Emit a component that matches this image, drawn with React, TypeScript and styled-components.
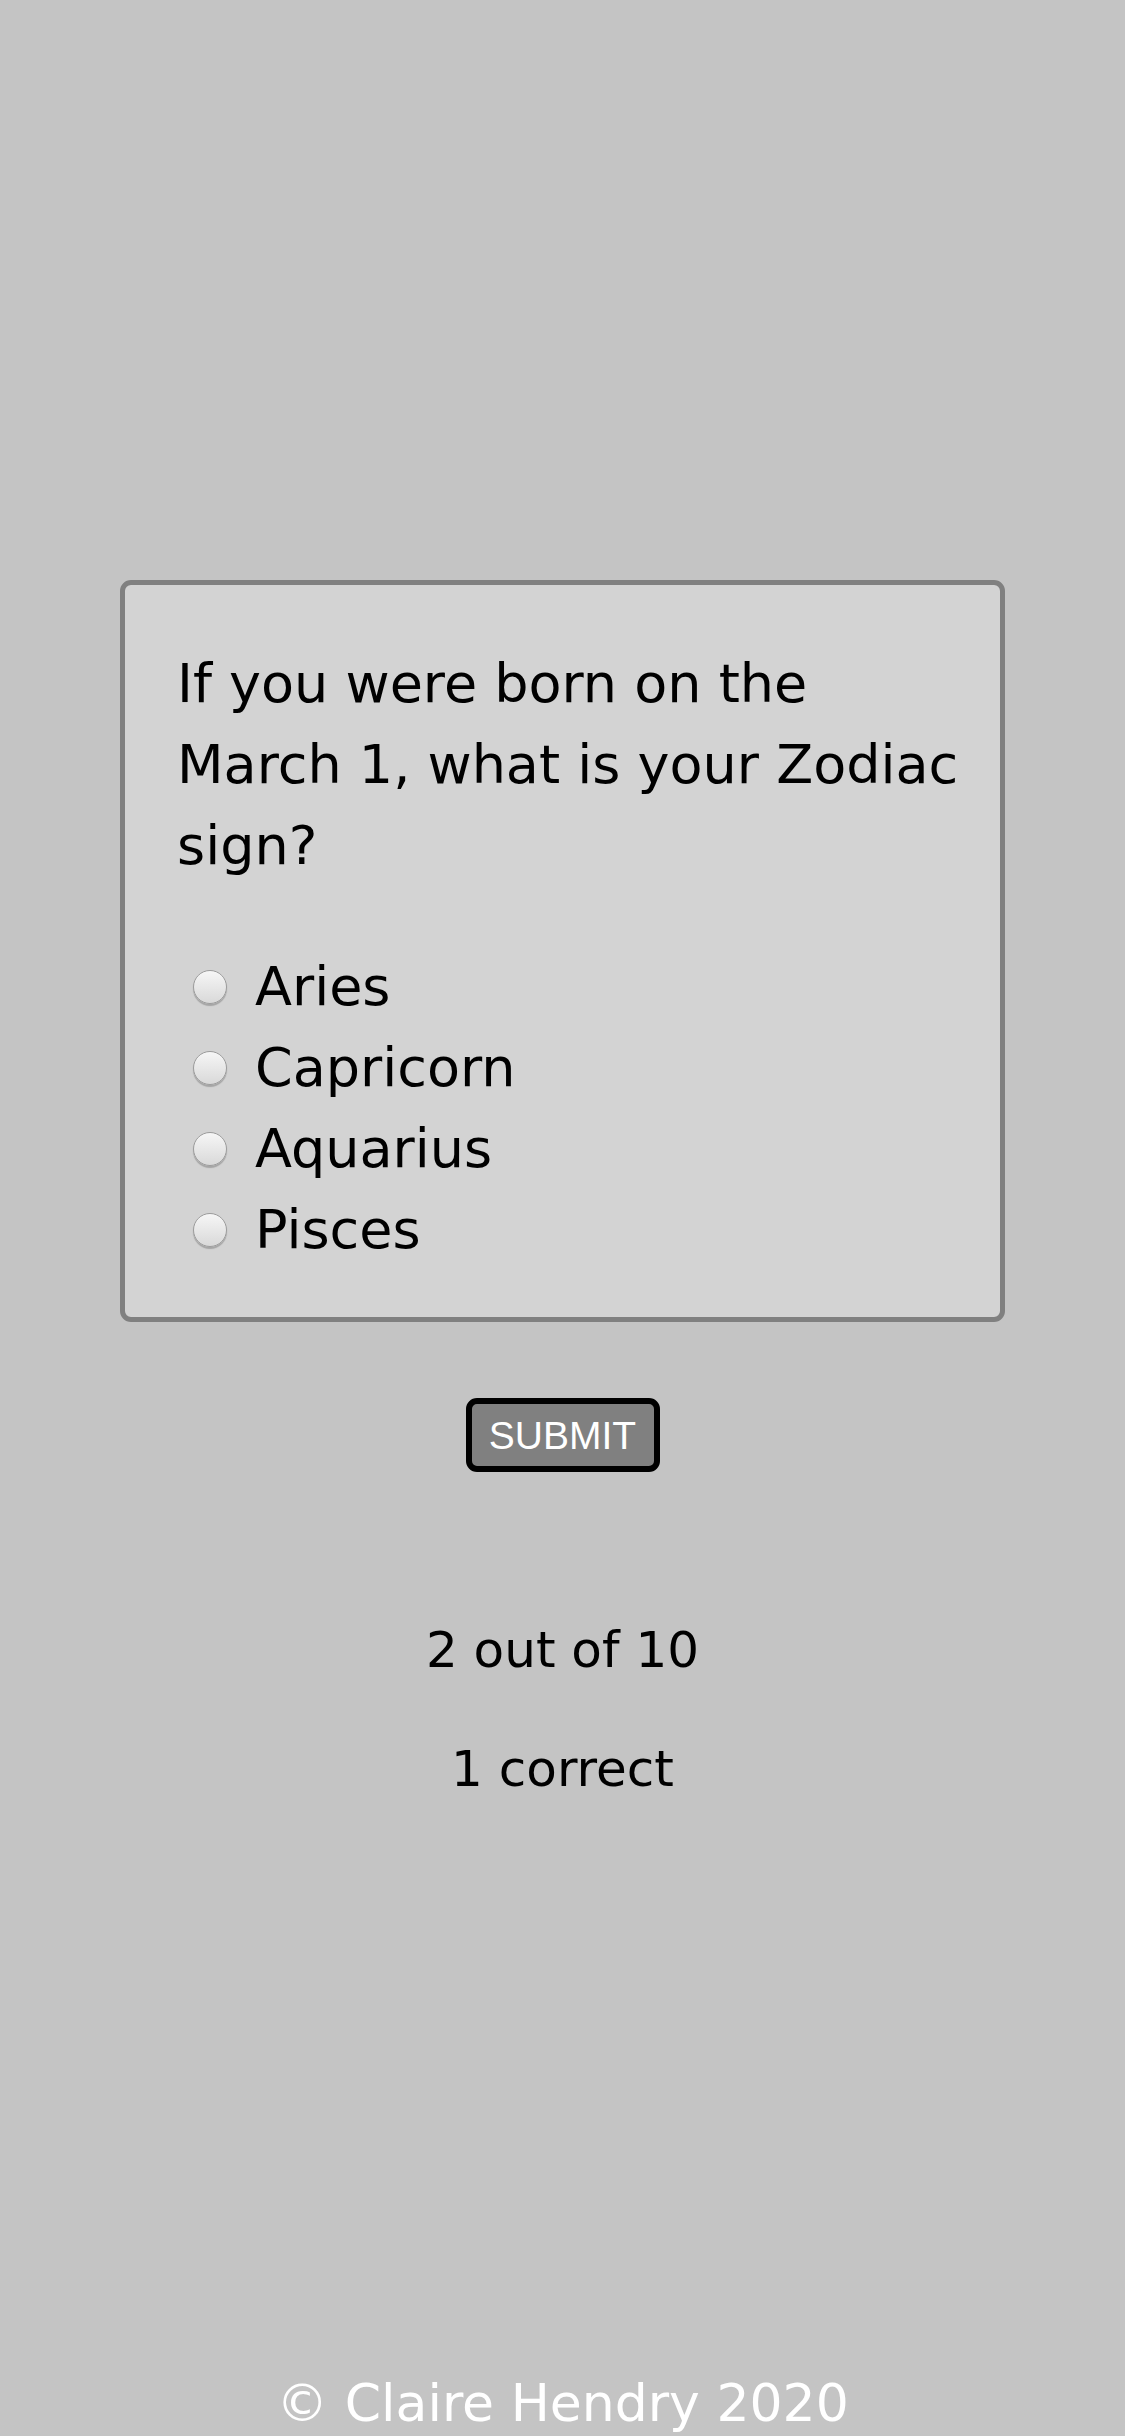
import React, { useState } from "react";
import styled, { createGlobalStyle } from "styled-components";

const GlobalStyle = createGlobalStyle`
  html, body {
    margin: 0;
    padding: 0;
    background: #c4c4c4;
  }
  body {
    font-family: "DejaVu Sans", "Liberation Sans", sans-serif;
    color: #000;
  }
  * { box-sizing: border-box; }
`;

const Page = styled.div`
  min-height: 100vh;
  display: flex;
  flex-direction: column;
  background: #c4c4c4;
`;

const Main = styled.main`
  flex: 1;
  display: flex;
  flex-direction: column;
  align-items: center;
  padding-top: 580px;
`;

const Card = styled.form`
  width: 885px;
  background: #d3d3d3;
  border: 5px solid #808080;
  border-radius: 11px;
  padding: 58px 30px 47px 52px;
  display: flex;
  flex-direction: column;
  gap: 60px;
`;

const Question = styled.p`
  margin: 0;
  font-size: 54px;
  line-height: 81px;
  color: #000;
`;

const Options = styled.div`
  display: flex;
  flex-direction: column;
`;

const OptionRow = styled.label`
  display: flex;
  align-items: center;
  height: 81px;
  font-size: 54px;
  line-height: 81px;
  color: #000;
  cursor: pointer;
`;

const Radio = styled.input.attrs({ type: "radio" })`
  appearance: none;
  -webkit-appearance: none;
  margin: 0 28px 0 16px;
  width: 34px;
  height: 34px;
  flex: none;
  border-radius: 50%;
  border: 1.5px solid #9c9c9c;
  background: linear-gradient(#f6f6f6, #d9d9d9);
  box-shadow: 0 2px 1px rgba(0, 0, 0, 0.22);
  &:checked {
    background: radial-gradient(circle, #333 0 30%, transparent 32%),
      linear-gradient(#f6f6f6, #d9d9d9);
  }
`;

const SubmitButton = styled.button`
  margin-top: 76px;
  width: 194px;
  height: 74px;
  border: 6px solid #000;
  border-radius: 11px;
  background: #808080;
  color: #fff;
  font-family: "Liberation Sans", Arial, sans-serif;
  font-size: 39px;
  line-height: 1;
  padding: 0;
  cursor: pointer;
`;

const Stats = styled.div`
  margin-top: 139px;
  display: flex;
  flex-direction: column;
  align-items: center;
  gap: 41px;
`;

const StatLine = styled.p`
  margin: 0;
  font-size: 50px;
  line-height: 78px;
  color: #000;
`;

const Footer = styled.footer`
  text-align: center;
  font-size: 52px;
  line-height: 66px;
  color: #fff;
`;

const options = ["Aries", "Capricorn", "Aquarius", "Pisces"];

export default function App() {
  const [choice, setChoice] = useState<string | null>(null);
  return (
    <Page>
      <GlobalStyle />
      <Main>
        <Card onSubmit={(e) => e.preventDefault()}>
          <Question>If you were born on the March 1, what is your Zodiac sign?</Question>
          <Options>
            {options.map((o) => (
              <OptionRow key={o}>
                <Radio
                  name="zodiac"
                  value={o}
                  checked={choice === o}
                  onChange={() => setChoice(o)}
                />
                {o}
              </OptionRow>
            ))}
          </Options>
        </Card>
        <SubmitButton type="button">SUBMIT</SubmitButton>
        <Stats>
          <StatLine>2 out of 10</StatLine>
          <StatLine>1 correct</StatLine>
        </Stats>
      </Main>
      <Footer>© Claire Hendry 2020</Footer>
    </Page>
  );
}
